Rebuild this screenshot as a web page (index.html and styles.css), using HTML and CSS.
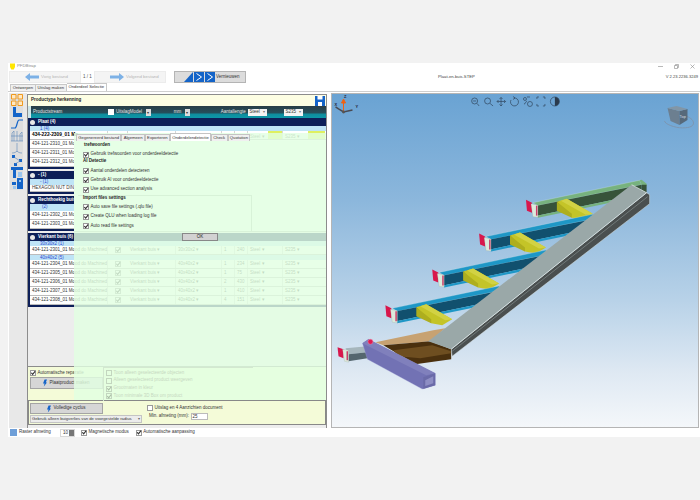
FILE: index.html
```html
<!DOCTYPE html>
<html lang="nl">
<head>
<meta charset="utf-8">
<title>PFDBtrap</title>
<link rel="stylesheet" href="styles.css">
</head>
<body>
<div class="app">
  <div class="titlebar">
    <svg class="appicon" viewBox="0 0 6 7"><path class="i-yellow" d="M0 0h6v4L4.500 7h-3L0 4z"/></svg>
    <span class="title-text">PFDBtrap</span>
    <div class="winctl">
      <svg viewBox="0 0 5 5"><path class="i-ctl" d="M0 2.500h5"/></svg>
      <svg viewBox="0 0 5 5"><path class="i-ctl" d="M.5 1.500h3v3h-3zM1.500 1.500v-1h3v3h-1"/></svg>
      <svg viewBox="0 0 5 5"><path class="i-ctl" d="M.5.500l4 4M4.500.500l-4 4"/></svg>
    </div>
  </div>
  <div class="toolbar">
    <div class="navbtn">
      <svg class="navarrow" viewBox="0 0 14 8"><path class="i-nav" d="M0 4l5-4v2.500h9v3H5V8z"/></svg>
      <span>Vorig bestand</span>
    </div>
    <span class="pager">1 / 1</span>
    <div class="navbtn">
      <svg class="navarrow" viewBox="0 0 14 8"><path class="i-nav" d="M14 4L9 0v2.500H0v3h9V8z"/></svg>
      <span>Volgend bestand</span>
    </div>
    <div class="refresh">
      <svg class="refresh-icon" viewBox="0 0 31 10"><path class="i-blue" d="M0 10L9 0v10z"/><path class="i-blue" d="M10 0h10v10H10zM21 0h10v10H21z"/><path class="i-chev" d="M12.500 1.500l5 3.500-5 3.500M23.500 1.500l5 3.500-5 3.500"/></svg>
      <span>Vernieuwen</span>
    </div>
    <span class="filename">Plaat-en-buis.STEP</span>
    <span class="version">V 2.23.2236.3249</span>
  </div>
  <div class="tabs">
    <span class="tab">Ontwerpen</span>
    <span class="tab">Uitslag maken</span>
    <span class="tab tab-on">Onderdeel Selectie</span>
  </div>
  <div class="main">
    <div class="strip">
      <div class="tool"><svg viewBox="0 0 12 12"><path class="i-grid" d="M.5.500h4.500v4.500H.5zM7 .500h4.500v4.500H7zM.5 7h4.500v4.500H.5zM7 7h4.500v4.500H7z"/></svg></div>
      <div class="tool"><svg viewBox="0 0 12 12"><path class="i-blue" d="M2 1h3v6h6v4H2z"/></svg></div>
      <div class="tool"><svg viewBox="0 0 12 12"><path class="i-line" d="M0 10h4c2 0 2-8 4-8h4"/></svg></div>
      <div class="tool"><svg viewBox="0 0 12 12"><path class="i-line-t" d="M1 11V3l2-2v10M6 11V1M9 11V4l2-2v9M0 11h12M0 6h12"/></svg></div>
      <div class="tool"><svg viewBox="0 0 12 12"><path class="i-line-t" d="M6 1v9M1 11c3 0 4-1 5-2 1 1 2 2 5 2"/></svg></div>
      <div class="tool"><svg viewBox="0 0 12 12"><path class="i-blue" d="M1 1h3v3H1zM8 5h3v3H8zM3 9h3v3H3z"/><path class="i-line-t" d="M3 3l6 4M4 10l5-3"/></svg></div>
      <div class="tool"><svg viewBox="0 0 12 12"><path class="i-blue" d="M0 1h12v3H5v8H2V4H0z"/><path class="i-pale" d="M7 6h4v5H7z"/></svg></div>
      <div class="tool"><svg viewBox="0 0 12 12"><path class="i-blue" d="M6 0h6v11H6zM1 4h4v3H1z"/><path class="i-pale" d="M8 2h2v2H8zM2 8h3v3H2z"/></svg></div>
    </div>
    <div class="panel">
      <div class="panel-head">
        <span>Productype herkenning</span>
        <svg class="save" viewBox="0 0 10 10"><path class="i-blue" d="M0 0h10v10H0z"/><path class="i-white" d="M2.500 0h5v3.500h-5zM3 6h4v4H3z"/></svg>
      </div>
      <div class="filter">
        <span class="f-stream">Productstream</span>
        <span class="f-check"><i class="ck ck-white"></i>Uitslag</span>
        <span class="f-model">Model</span><span class="mini">▾</span>
        <span class="f-mm">mm</span><span class="mini">▾</span>
        <span class="f-len">Aantal</span><span class="f-len2">lengte</span>
        <span class="drop d-steel">Steel<b>▾</b></span>
        <span class="drop d-grade">S235<b>▾</b></span>
      </div>
      <div class="list">
        <section class="sec">
          <div class="sec-head"><i class="disc"></i>Plaat (4)</div>
          <div class="sub sub-s">1 (4)</div>
          <div class="row row-bold row-hl"><span>434-222-2309_01 Ma</span><span></span><span></span><span></span><span></span><span></span><span class="c-y">Steel ▾</span><span class="c-y">S235 ▾</span></div>
          <div class="row"><span>434-121-2310_01 Mo</span></div>
          <div class="row"><span>434-121-2311_01 Mo</span></div>
          <div class="row"><span>434-121-2312_01 Mo</span></div>
        </section>
        <section class="sec">
          <div class="sec-head"><i class="disc"></i>- (1)</div>
          <div class="sub">- (1)</div>
          <div class="row row-s"><span>HEXAGON NUT DIN 9</span></div>
        </section>
        <section class="sec">
          <div class="sec-head"><i class="disc"></i>Rechthoekig buis</div>
          <div class="sub sub-l">(2)</div>
          <div class="row"><span>434-121-2302_01 Mo</span></div>
          <div class="row"><span>434-121-2303_01 Mo</span></div>
        </section>
        <section class="sec">
          <div class="sec-head"><i class="disc"></i>Vierkant buis (6)</div>
          <div class="sub sub-s">30x30x2 (1)</div>
          <div class="row"><span>434-121-2301_01 Mood do Machined</span><i class="ck ck-cell"></i><span>Vierkant buis ▾</span><span>30x30x2 ▾</span><span>1</span><span>240</span><span>Steel ▾</span><span>S235 ▾</span></div>
          <div class="sub sub-s">40x40x2 (5)</div>
          <div class="row"><span>434-121-2304_01 Mood do Machined</span><i class="ck ck-cell"></i><span>Vierkant buis ▾</span><span>40x40x2 ▾</span><span>1</span><span>234</span><span>Steel ▾</span><span>S235 ▾</span></div>
          <div class="row"><span>434-121-2305_01 Mood do Machined</span><i class="ck ck-cell"></i><span>Vierkant buis ▾</span><span>40x40x2 ▾</span><span>1</span><span>75</span><span>Steel ▾</span><span>S235 ▾</span></div>
          <div class="row"><span>434-121-2306_01 Mood do Machined</span><i class="ck ck-cell"></i><span>Vierkant buis ▾</span><span>40x40x2 ▾</span><span>2</span><span>430</span><span>Steel ▾</span><span>S235 ▾</span></div>
          <div class="row"><span>434-121-2307_01 Mood do Machined</span><i class="ck ck-cell"></i><span>Vierkant buis ▾</span><span>40x40x2 ▾</span><span>1</span><span>410</span><span>Steel ▾</span><span>S235 ▾</span></div>
          <div class="row"><span>434-121-2308_01 Mood do Machined</span><i class="ck ck-cell"></i><span>Vierkant buis ▾</span><span>40x40x2 ▾</span><span>4</span><span>151</span><span>Steel ▾</span><span>S235 ▾</span></div>
        </section>
      </div>
      <div class="box box-auto">
        <label class="line"><i class="ck"></i>Automatische reparatie</label>
        <div class="bigbtn"><svg class="run" viewBox="0 0 5 9"><path class="i-run" d="M2 0h3L3.500 4H5L1 9l1-4H0z"/></svg>Plaatproduct maken</div>
      </div>
      <div class="box box-full">
        <div class="full-left">
          <div class="bigbtn"><svg class="run" viewBox="0 0 5 9"><path class="i-run" d="M2 0h3L3.500 4H5L1 9l1-4H0z"/></svg>Volledige cyclus</div>
          <div class="radius">Gebruik alleen buigverlies van de voorgestelde radius<b>▾</b></div>
        </div>
        <div class="full-right">
          <label class="line"><i class="ck ck-off"></i>Uitslag en 4 Aanzichten document</label>
          <div class="line min"><span>Min. afmeting (mm):</span><span class="input">25</span></div>
        </div>
      </div>
      <div class="overlay">
        <div class="dlg-tabs">
          <span class="dtab">Gegenereerd bestand</span>
          <span class="dtab">Algemeen</span>
          <span class="dtab">Exporteren</span>
          <span class="dtab dtab-on">Onderdelendetectie</span>
          <span class="dtab">Check</span>
          <span class="dtab">Quotation</span>
        </div>
        <div class="dlg-body">
          <h4>trefwoorden</h4>
          <label class="line opt"><i class="ck"></i>Gebruik trefwoorden voor onderdeeldetectie</label>
          <h4 class="h-sub">AI Detectie</h4>
          <label class="line opt"><i class="ck"></i>Aantal onderdelen detecteren</label>
          <label class="line opt"><i class="ck"></i>Gebruik AI voor onderdeeldetectie</label>
          <label class="line opt"><i class="ck"></i>Use advanced section analysis</label>
          <div class="grp">
            <h4 class="h-sub">Import files settings</h4>
            <label class="line opt"><i class="ck"></i>Auto save file settings (.qlu file)</label>
            <label class="line opt"><i class="ck"></i>Create QLU when loading log file</label>
            <label class="line opt"><i class="ck"></i>Auto read file settings</label>
          </div>
        </div>
        <div class="ok-wrap"><span class="ok">OK</span></div>
        <div class="ghost">
          <label class="line"><i class="ck ck-ghost"></i>Toon alleen geselecteerde objecten</label>
          <label class="line"><i class="ck ck-ghost"></i>Alleen geselecteerd product weergeven</label>
          <label class="line"><i class="ck ck-ghost ck-on"></i>Grootmaten in kleur</label>
          <label class="line"><i class="ck ck-ghost ck-on"></i>Toon minimale 3D Box om product</label>
        </div>
      </div>
    </div>
    <div class="viewer">
      <svg class="scene" viewBox="332 93 366 334">
        <defs>
          <g id="beam">
            <path class="b-top" d="M533 202L640 179.500 642 184 538 205z"/>
            <path class="b-face" d="M537 205L642 184V193L537 215z"/>
            <path class="b-low" d="M537 215L642 193V195.500L538 217z"/>
            <path class="red" d="M526 199L532 202V212L527 210z"/>
            <path class="cap" d="M531 203L538 204.500V216.500L533 216z"/>
            <path class="pink" d="M536 205L537.500 205V215L536 215z"/>
          </g>
          <g id="yel">
            <path class="y-face" d="M557 201L572 217 583 219 593 213 567 198z"/>
            <path class="y-low" d="M557 201L572 213 572 217 557 210z"/>
            <path class="y-top" d="M561 200L567 198 593 213 586 214z"/>
          </g>
        </defs>
        <use href="#beam" class="tint-green"/>
        <path class="g-top" d="M640 179.500L642 179 647 183V185L642 184z"/>
        <path class="g-end" d="M642 184L647 184V192L642 193z"/>
        <use href="#yel"/>
        <g transform="translate(-47 34)"><use href="#beam" class="tint-blue"/><use href="#yel"/></g>
        <g transform="translate(-94 70)"><use href="#beam" class="tint-blue"/><use href="#yel"/></g>
        <g transform="translate(-141 106)"><use href="#beam" class="tint-blue"/><use href="#yel"/></g>

        <path class="br-top" d="M375 342L433 330 445 328 430 341 383 345z"/>
        <path class="br-face" d="M383 345L430 341 451 349V359L415 364z"/>
        <path class="br-mid" d="M393 350L432 345 451 351V353L420 358 398 356z"/>

        <path class="sl-side" d="M647 192L650 194V203L452 356 451 349z"/>
        <path class="sl-line" d="M648 196L452 351"/>
        <path class="sl-top" d="M632 184L647 192 451 349 428 341z"/>
        <path class="sl-edge" d="M632 184L647 192 451 349"/>

        <path class="red" d="M337 347L343 349V358L338 356z"/>
        <path class="st-top" d="M345 348L367 346V352L348 354z"/>
        <path class="st-face" d="M348 354L367 352V358L348 361z"/>
        <path class="cap" d="M342 349L348 350V362L344 361z"/>
        <path class="pink" d="M346 351L347.500 351V360L346 360z"/>

        <path class="p-face" d="M362 343L368 339 435 373V385L422 389 367 359z"/>
        <path class="p-top" d="M362 343L368 339 435 373 426 375z"/>
        <path class="p-end" d="M423 377L435 373V385L423 389z"/>
        <path class="p-hole" d="M425 380L433 376V383L425 386z"/>
        <circle class="bolt" cx="370" cy="341.500" r="2.500"/>

        <!-- axis triad -->
        <path class="ax-shadow" d="M338 108L343 111 352 109M338 108L335 106"/>
        <path class="ax-z" d="M343 110V102H341L343 98 345 102H343z"/>
        <circle class="ax-dot" cx="343" cy="111" r="1.500"/>
        <text class="ax-t" x="343.500" y="97">Z</text>
        <text class="ax-t" x="334" y="105">X</text>
        <text class="ax-t" x="355" y="107">Y</text>

        <!-- viewer tools -->
        <g class="tools">
          <circle cx="474.500" cy="100" r="3"/><path d="M477 102.500L479 105"/><path d="M473 100h3"/>
          <circle cx="487.500" cy="100" r="3"/><path d="M490 102.500L493 105"/>
          <path d="M501 96.500V105M497 100.500H505.500M499.500 98L501 96.500 502.500 98M499.500 103.500L501 105 502.500 103.500M498.500 99L497 100.500 498.500 102M504 99L505.500 100.500 504 102"/>
          <path d="M511 99A4 4 0 1 0 514 97"/><path d="M513 95.500L515 97 513 98.500"/>
          <circle cx="525" cy="98" r="1.500"/><circle cx="530" cy="103" r="2.500"/><path d="M524 103c2 0 1-2 3-3M527 96h3"/>
          <path d="M537 98V96H539M543 96H545V98M537 103V105H539M543 105H545V103"/>
        </g>
        <path class="half" d="M555 96A4.500 4.500 0 0 1 555 105z"/>
        <circle class="half-o" cx="555" cy="100.500" r="4.500"/>

        <!-- view cube -->
        <path class="cu-ring" d="M665 120c0 3 10 7 18 7s11-2 11-5-4-6-8-7"/>
        <path class="cu-left" d="M668 107L680 110V124L671 120z"/>
        <path class="cu-right" d="M680 110L688 108V119L680 124z"/>
        <path class="cu-top" d="M668 107L677 105 688 108 680 110z"/>
        <text class="cu-t" x="680" y="117">Top</text>
      </svg>
    </div>
  </div>
  <div class="status">
    <i class="swatch"></i>
    <span class="s-label">Raster afmeting</span>
    <span class="spin">10<b></b></span>
    <label class="line s-mag"><i class="ck"></i>Magnetische modus</label>
    <label class="line"><i class="ck"></i>Automatische aanpassing</label>
  </div>
</div>
</body>
</html>
```

FILE: styles.css
```css
* { box-sizing: border-box; }
html, body { margin: 0; height: 100%; }
body {
  background: #f2f2f2;
  padding: 63px 0 0 8px;
  font: 4.5px/1.1 "Liberation Sans", Arial, sans-serif;
  color: #333;
  overflow: hidden;
}
.app {
  width: 692px;
  height: 374px;
  background: #fff;
  display: flex;
  flex-direction: column;
}
h4 { margin: 0; font-size: 4.5px; }
i { display: block; font-style: normal; }

/* title bar */
.titlebar { height: 7px; flex: none; display: flex; align-items: center; padding: 0 0 0 2px; }
.appicon { width: 5px; height: 7px; }
.i-yellow { fill: #ffe600; }
.title-text { margin-left: 2px; color: #888; font-size: 4.3px; }
.winctl { margin-left: auto; display: flex; gap: 11px; padding-right: 5px; }
.winctl svg { width: 5px; height: 5px; }
.i-ctl { fill: none; stroke: #8a8a8a; stroke-width: .6; }

/* toolbar */
.toolbar { height: 14px; flex: none; display: flex; align-items: center; padding-left: 1px; position: relative; }
.navbtn {
  width: 72px; height: 12px;
  background: #f4f4f4; border: 1px solid #ececec;
  display: flex; align-items: center; gap: 2px; padding-left: 15px;
  color: #b4b4b4; font-size: 4.4px;
}
.navarrow { width: 14px; height: 8px; flex: none; }
.i-nav { fill: #7db1e6; }
.pager { width: 13px; text-align: center; color: #555; }
.refresh {
  margin-left: 8px; width: 72px; height: 12px;
  background: #dcdcdc; border: 1px solid #b4b4b4;
  display: flex; align-items: center; gap: 1px; padding-left: 9px;
}
.refresh-icon { width: 31px; height: 10px; flex: none; }
.i-blue { fill: #1464c8; }
.i-chev { fill: none; stroke: #fff; stroke-width: 1; }
.filename { margin-left: 192px; color: #444; font-size: 4.200px; }
.version { margin-left: auto; padding-right: 2px; color: #444; font-size: 4.100px; }

/* tabs */
.tabs { height: 8px; flex: none; display: flex; padding-left: 2px; align-items: flex-end; border-bottom: 1px solid #cfcfcf; font-size: 4.200px; }
.tab { height: 7px; padding: 0 1.700px; background: #f0f0f0; border: solid #c8c8c8; border-width: 1px 1px 0 0; white-space: nowrap; line-height: 5px; }
.tab:first-child { border-left: 1px solid #c8c8c8; }
.tab-on { background: #fff; height: 8px; }

/* main */
.main { height: 336px; flex: none; display: flex; padding-top: 1px; }
.strip {
  width: 18px; flex: none; margin-left: 1px;
  background: #e8e8e8;
  display: flex; flex-direction: column; gap: 0;
  padding: 1px 0 0 1px;
}
.tool { width: 13px; height: 12px; background: #dedede; display: flex; align-items: center; justify-content: center; }
.tool svg { width: 12px; height: 12px; }
.i-grid { fill: #ffe9c4; stroke: #f09a1e; stroke-width: 1; }
.i-line { fill: none; stroke: #1464c8; stroke-width: 1.200; }
.i-line-t { fill: none; stroke: #5a86b8; stroke-width: .6; }
.i-pale { fill: #9cc6ee; }
.i-white { fill: #fff; }

.panel {
  width: 300px; flex: none; position: relative;
  background: #ededed;
  border: 1px solid #8c8c8c; border-bottom: 0;
  display: flex; flex-direction: column;
  margin-top: 1px;
}
.panel-head {
  height: 11px; flex: none; background: #fdfee3;
  display: flex; align-items: center; justify-content: space-between;
  padding: 0 1px 0 3px; font-weight: bold; font-size: 4.500px; color: #222;
}
.save { width: 10px; height: 10px; }
.filter {
  height: 12px; flex: none;
  background: linear-gradient(#2a3d46 0, #24505c 60%, #0f8c9c 65%, #0d97a8 100%);
  display: flex; align-items: center; color: #e8e8e8; position: relative;
  box-shadow: inset 3px 0 0 #cfe6ea;
}
.f-stream { margin-left: 5px; width: 75px; }
.f-check { display: flex; align-items: center; gap: 2px; }
.f-model { width: 16px; }
.mini { width: 5px; height: 7px; background: #ddd; color: #333; text-align: center; font-size: 4px; line-height: 7px; }
.f-mm { margin-left: 23px; width: 11px; }
.f-len { margin-left: 31px; }
.f-len2 { width: 14px; }
.drop {
  display: flex; justify-content: space-between; align-items: center;
  height: 7px; background: #f3f3f3; color: #333; padding: 0 2px;
}
.drop b { font-weight: normal; color: #777; font-size: 4px; }
.d-steel { width: 19px; }
.d-grade { width: 19px; margin-left: 17px; }

/* list */
.list { flex: 1; display: flex; flex-direction: column; gap: 2px; }
.sec { background: #fff; border: solid #0d1f58; border-width: 0 0 2px 2px; }
.sec-head {
  height: 8px; margin-left: -2px; background: #0d1f58; color: #fff;
  font-weight: bold; display: flex; align-items: center; gap: 3px; padding-left: 2px;
}
.disc { width: 5px; height: 5px; border-radius: 50%; background: #e8e8e8; }
.sub {
  height: 6px; line-height: 6px; background: #bfe4f6; color: #2a3fd0;
  padding-left: 10px;
}
.sub-s { height: 5px; line-height: 5px; }
.sub-l { height: 7px; line-height: 6px; padding-left: 12px; }
.row {
  height: 9px; display: grid; align-items: center;
  grid-template-columns: 78px 20px 48px 46px 13px 13px 35px 42px;
  border-bottom: 1px solid #bcbcbc; background: #fff; white-space: nowrap;
}
.row > span { overflow: hidden; padding-left: 2px; height: 100%; line-height: 8px; border-right: 1px solid #d6d6d6; color: #333; }
.row > span:last-child { border-right: 0; }
.row-bold > span { font-weight: bold; color: #000; font-size: 4.800px; }
.row-hl > span.c-y { font-weight: normal; color: #555; font-size: 4.500px; line-height: 11px; background: linear-gradient(90deg, #fff 60%, #dff060 60%); }
.row-s { height: 7px; }
.row-s > span { line-height: 6px; }

/* checkboxes */
.ck {
  width: 6px; height: 6px; flex: none; position: relative;
  background: #fff; border: 1px solid #9a9a9a;
}
.ck::after {
  content: ""; position: absolute; inset: -1px;
  background: #333;
  clip-path: polygon(14% 48%, 32% 40%, 44% 60%, 80% 14%, 92% 28%, 44% 88%);
}
.ck-white { border-color: #fff; }
.ck-white::after, .ck-off::after, .ck-ghost::after { display: none; }
.ck-ghost.ck-on::after { display: block; }
.ck-cell { justify-self: center; }
.line { display: flex; align-items: center; gap: 1.500px; white-space: nowrap; }

/* bottom boxes */
.box { flex: none; background: #f4fbd8; }
.box-auto { height: 34px; padding: 3px 2px; border-top: 1px solid #8c8c8c; }
.bigbtn {
  width: 73px; height: 12px; margin-top: 1px;
  background: #d6d6d6; border: 1px solid #a4a4a4;
  display: flex; align-items: center; justify-content: center; gap: 2px;
}
.run { width: 4px; height: 8px; }
.i-run { fill: #1464c8; }
.box-full {
  height: 25px; display: flex; padding: 2px 1px 1px 1px;
  border: 1px solid #888; margin-bottom: 3px;
}
.full-left { width: 115px; flex: none; }
.full-left .bigbtn { margin: 0 0 1px; height: 11px; }
.radius {
  height: 8px; width: 112px; background: #ececec; border: 1px solid #c4c4c4;
  display: flex; align-items: center; justify-content: space-between; padding: 0 1px;
  white-space: nowrap; font-size: 4.200px;
}
.radius b { font-weight: normal; font-size: 4px; color: #666; }
.full-right { padding: 2px 0 0 2px; display: flex; flex-direction: column; gap: 2px; }
.min { padding-left: 2px; }
.input { width: 17px; height: 7px; background: #fff; border: 1px solid #bbb; padding-left: 1px; line-height: 5px; }

/* overlay dialog */
.overlay {
  position: absolute; left: 46px; right: 0; top: 38px; height: 267px;
  background: rgba(226, 255, 226, .82);
  display: flex; flex-direction: column;
}
.dlg-tabs { height: 8px; flex: none; display: flex; align-items: flex-end; padding-left: 2px; font-size: 4.200px; }
.dtab {
  height: 7px; padding: 0 1.300px; line-height: 6px; white-space: nowrap;
  background: #f0f0f0; border: 1px solid #c4c4c4; border-bottom: 0; color: #333;
}
.dtab-on { background: #fff; height: 8px; line-height: 7px; }
.dlg-body {
  height: 91px; flex: none; background: #e6ffe6; padding: 2px 0 0 9px;
  display: flex; flex-direction: column; border-bottom: 1px solid #d9f2d9;
}
.dlg-body h4 { height: 6px; color: #222; padding-left: 1px; }
.dlg-body .h-sub { margin-left: -1px; }
.opt { height: 9.500px; color: #333; }
.dlg-body h4 + .opt { margin-top: 1px; }
.grp { margin-left: -5px; padding-left: 5px; width: 174px; flex: 1; border: solid #d8f2d8; border-width: 1px 1px 0 0; }
.ok-wrap { height: 10px; flex: none; display: flex; padding: 1px 0 0 108px; }
.ok {
  width: 36px; height: 8px; background: #d2d2d2; border: 1px solid #888;
  text-align: center; line-height: 6px; color: #222;
}
.ghost {
  margin: 125px 0 0 29px; width: 150px; flex: 1;
  display: flex; flex-direction: column; gap: 1.800px;
  color: #c6d8c0; padding: 2px; border: solid #d3e8d0; border-width: 1px 0 0 1px;
}
.ck-ghost { background: transparent; border-color: #c3d6bf; }
.ck-ghost::after { background: #a9bca5; }

/* viewer */
.viewer {
  width: 368px; flex: none; margin-left: 4px;
  border: 1px solid #b5b5b5;
  background: linear-gradient(#6aa3d3 0, #8cb7dc 32%, #b8d2e8 62%, #dfe9f3 84%, #f4f7fa 100%);
}
.scene { display: block; width: 100%; height: 100%; }
.b-top { fill: var(--t); stroke: #cfe4ea; stroke-width: .3; }
.b-face { fill: var(--f); }
.b-low { fill: var(--t); }
.tint-green { --t: #77b27e; --f: #37533a; }
.tint-blue { --t: #1e97c6; --f: #11506e; }
.g-top { fill: #77b27e; }
.g-end { fill: #37533a; }
.red { fill: #d8174c; }
.cap { fill: #dcebdc; stroke: #8a9a8a; stroke-width: .2; }
.pink { fill: #c8406a; }
.y-face { fill: #c4c428; }
.y-low { fill: #aeae1e; }
.y-top { fill: #d2d244; }
.br-top { fill: #c7a272; }
.br-face { fill: #4a300e; }
.br-mid { fill: #6e4e20; }
.sl-side { fill: #4a4f4f; stroke: #dfe8e8; stroke-width: .5; }
.sl-line { fill: none; stroke: #9aa6a6; stroke-width: .5; }
.sl-top { fill: #9aa8a8; }
.sl-edge { fill: none; stroke: #e8f0f0; stroke-width: .7; }
.st-top { fill: #a6b6bc; }
.st-face { fill: #55666e; }
.p-face { fill: #7272b4; stroke: #a8a8d8; stroke-width: .3; }
.p-top { fill: #8080bc; }
.p-end { fill: #6a6aa8; }
.p-hole { fill: #8e8ec4; }
.bolt { fill: #e01a50; stroke: #f080a0; stroke-width: .5; }
.ax-shadow { fill: none; stroke: #4a4a52; stroke-width: 1.500; }
.ax-z { fill: #f06010; stroke: #f06010; stroke-width: 1; }
.ax-dot { fill: #555; }
.ax-t { font: bold 4px "Liberation Sans", sans-serif; fill: #223; }
.tools circle, .tools path { fill: none; stroke: #30455c; stroke-width: .7; }
.half { fill: #2a3a4c; }
.half-o { fill: none; stroke: #30455c; stroke-width: .7; }
.cu-ring { fill: none; stroke: #7c96b0; stroke-width: 1; }
.cu-left { fill: #6c7f90; }
.cu-right { fill: #56697a; }
.cu-top { fill: #8296a6; }
.cu-t { font: 4px "Liberation Sans", sans-serif; fill: #d5dde5; }

/* status */
.status { height: 9px; flex: none; display: flex; align-items: center; padding-left: 2px; background: #fff; }
.swatch { width: 7px; height: 7px; background: #6f9fd8; }
.s-label { margin-left: 2px; width: 41px; }
.spin { width: 15px; height: 8px; border: 1px solid #d8d8d8; text-align: right; padding-right: 6px; line-height: 6px; position: relative; }
.spin b { position: absolute; right: 0; top: 0; bottom: 0; width: 5px; background: #777; }
.s-mag { margin: 0 7px 0 6px; }
```
